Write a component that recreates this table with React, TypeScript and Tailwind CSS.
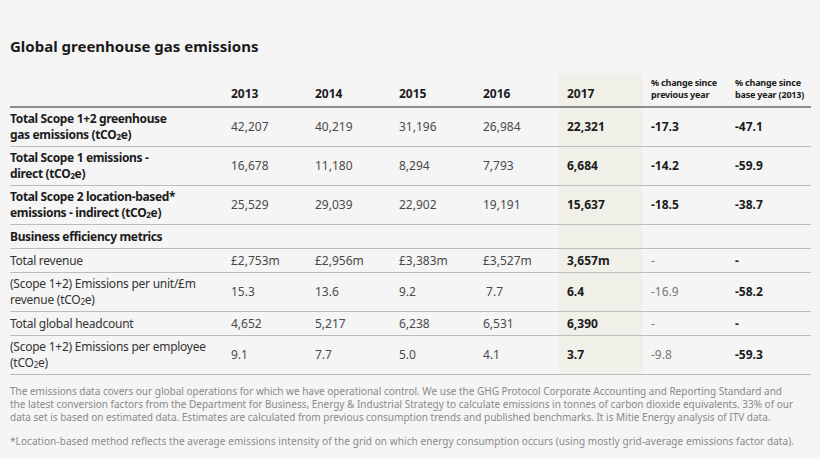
import React from "react";

type Row = {
  label: React.ReactNode;
  bold?: boolean;
  tall?: boolean;
  section?: boolean;
  vals?: string[];
  hl?: string;
  p1?: string;
  p1b?: boolean;
  p2?: string;
};

const Sub = () => <sub className="text-[8px] relative top-[1px] align-baseline">2</sub>;

const rows: Row[] = [
  {
    label: (<>Total Scope 1+2 greenhouse<br />gas emissions (tCO<Sub />e)</>),
    bold: true, tall: true, vals: ["42,207", "40,219", "31,196", "26,984"], hl: "22,321", p1: "-17.3", p1b: true, p2: "-47.1",
  },
  {
    label: (<>Total Scope 1 emissions -<br />direct (tCO<Sub />e)</>),
    bold: true, tall: true, vals: ["16,678", "11,180", "8,294", "7,793"], hl: "6,684", p1: "-14.2", p1b: true, p2: "-59.9",
  },
  {
    label: (<>Total Scope 2 location-based*<br />emissions - indirect (tCO<Sub />e)</>),
    bold: true, tall: true, vals: ["25,529", "29,039", "22,902", "19,191"], hl: "15,637", p1: "-18.5", p1b: true, p2: "-38.7",
  },
  { label: "Business efficiency metrics", bold: true, section: true },
  { label: "Total revenue", vals: ["£2,753m", "£2,956m", "£3,383m", "£3,527m"], hl: "3,657m", p1: "-", p2: "-" },
  {
    label: (<>(Scope 1+2) Emissions per unit/£m<br />revenue (tCO<Sub />e)</>),
    tall: true, vals: ["15.3", "13.6", "9.2", " 7.7"], hl: "6.4", p1: "-16.9", p2: "-58.2",
  },
  { label: "Total global headcount", vals: ["4,652", "5,217", "6,238", "6,531"], hl: "6,390", p1: "-", p2: "-" },
  {
    label: (<>(Scope 1+2) Emissions per employee<br />(tCO<Sub />e)</>),
    tall: true, vals: ["9.1", "7.7", "5.0", "4.1"], hl: "3.7", p1: "-9.8", p2: "-59.3",
  },
];

export default function App() {
  return (
    <div className="w-[820px] h-[459px] bg-[#f5f5f5] overflow-hidden" style={{ fontFamily: "'Noto Sans', sans-serif" }}>
      <div className="pl-[10px] pt-[36px]">
        <h1 className="text-[15px] font-bold text-[#1b1b1b] leading-[20px]">Global greenhouse gas emissions</h1>
        <div className="mt-[17px] w-[801px]">
          {/* header */}
          <div className="flex h-[35px] border-b-[2px] border-[#8c8c8c]">
            <div className="w-[213px]" />
            {["2013", "2014", "2015", "2016"].map((y) => (
              <div key={y} className="w-[84px] pl-[8px] flex items-end pb-[4px] text-[12px] leading-[16px] font-bold text-[#1b1b1b]">{y}</div>
            ))}
            <div className="w-[84px] pl-[8px] flex items-end pb-[4px] text-[12px] leading-[16px] font-bold text-[#1b1b1b] bg-[#f0efe8]">2017</div>
            <div className="w-[84px] pl-[8px] flex items-end pb-[5px] text-[9px] leading-[12px] font-bold text-[#1b1b1b] tracking-[-0.2px]">% change since<br />previous year</div>
            <div className="w-[84px] pl-[8px] flex items-end pb-[5px] text-[9px] leading-[12px] font-bold text-[#1b1b1b] tracking-[-0.2px]">% change since<br />base year (2013)</div>
          </div>
          {rows.map((r, i) => (
            <div key={i} className={`flex border-b border-[#bdbdbd] ${r.tall ? "h-[39px]" : "h-[24px]"}`}>
              <div className={`w-[213px] flex items-center text-[12px] leading-[16px] ${r.bold ? "font-bold text-[#1b1b1b] tracking-[-0.35px]" : "text-[#333333] tracking-[-0.25px]"}`}>
                <div>{r.label}</div>
              </div>
              {(r.vals ?? ["", "", "", ""]).map((v, j) => (
                <div key={j} className="w-[84px] pl-[8px] flex items-center text-[12px] text-[#4a4a4a] whitespace-pre">{v}</div>
              ))}
              <div className="w-[84px] pl-[8px] flex items-center text-[12px] font-bold text-[#1b1b1b] bg-[#f0efe8]">{r.hl ?? ""}</div>
              <div className={`w-[84px] pl-[8px] flex items-center text-[12px] ${r.p1b ? "font-bold text-[#1b1b1b]" : "text-[#777777]"}`}>{r.p1 ?? ""}</div>
              <div className="w-[84px] pl-[8px] flex items-center text-[12px] font-bold text-[#1b1b1b]">{r.p2 ?? ""}</div>
            </div>
          ))}
        </div>
        <div className="mt-[10px] text-[10px] leading-[13px] text-[#8a8a8a] whitespace-nowrap">
          <p>The emissions data covers our global operations for which we have operational control. We use the GHG Protocol Corporate Accounting and Reporting Standard and</p>
          <p>the latest conversion factors from the Department for Business, Energy &amp; Industrial Strategy to calculate emissions in tonnes of carbon dioxide equivalents. 33% of our</p>
          <p>data set is based on estimated data. Estimates are calculated from previous consumption trends and published benchmarks. It is Mitie Energy analysis of ITV data.</p>
          <p className="mt-[11px] tracking-[0.08px]">*Location-based method reflects the average emissions intensity of the grid on which energy consumption occurs (using mostly grid-average emissions factor data).</p>
        </div>
      </div>
    </div>
  );
}
